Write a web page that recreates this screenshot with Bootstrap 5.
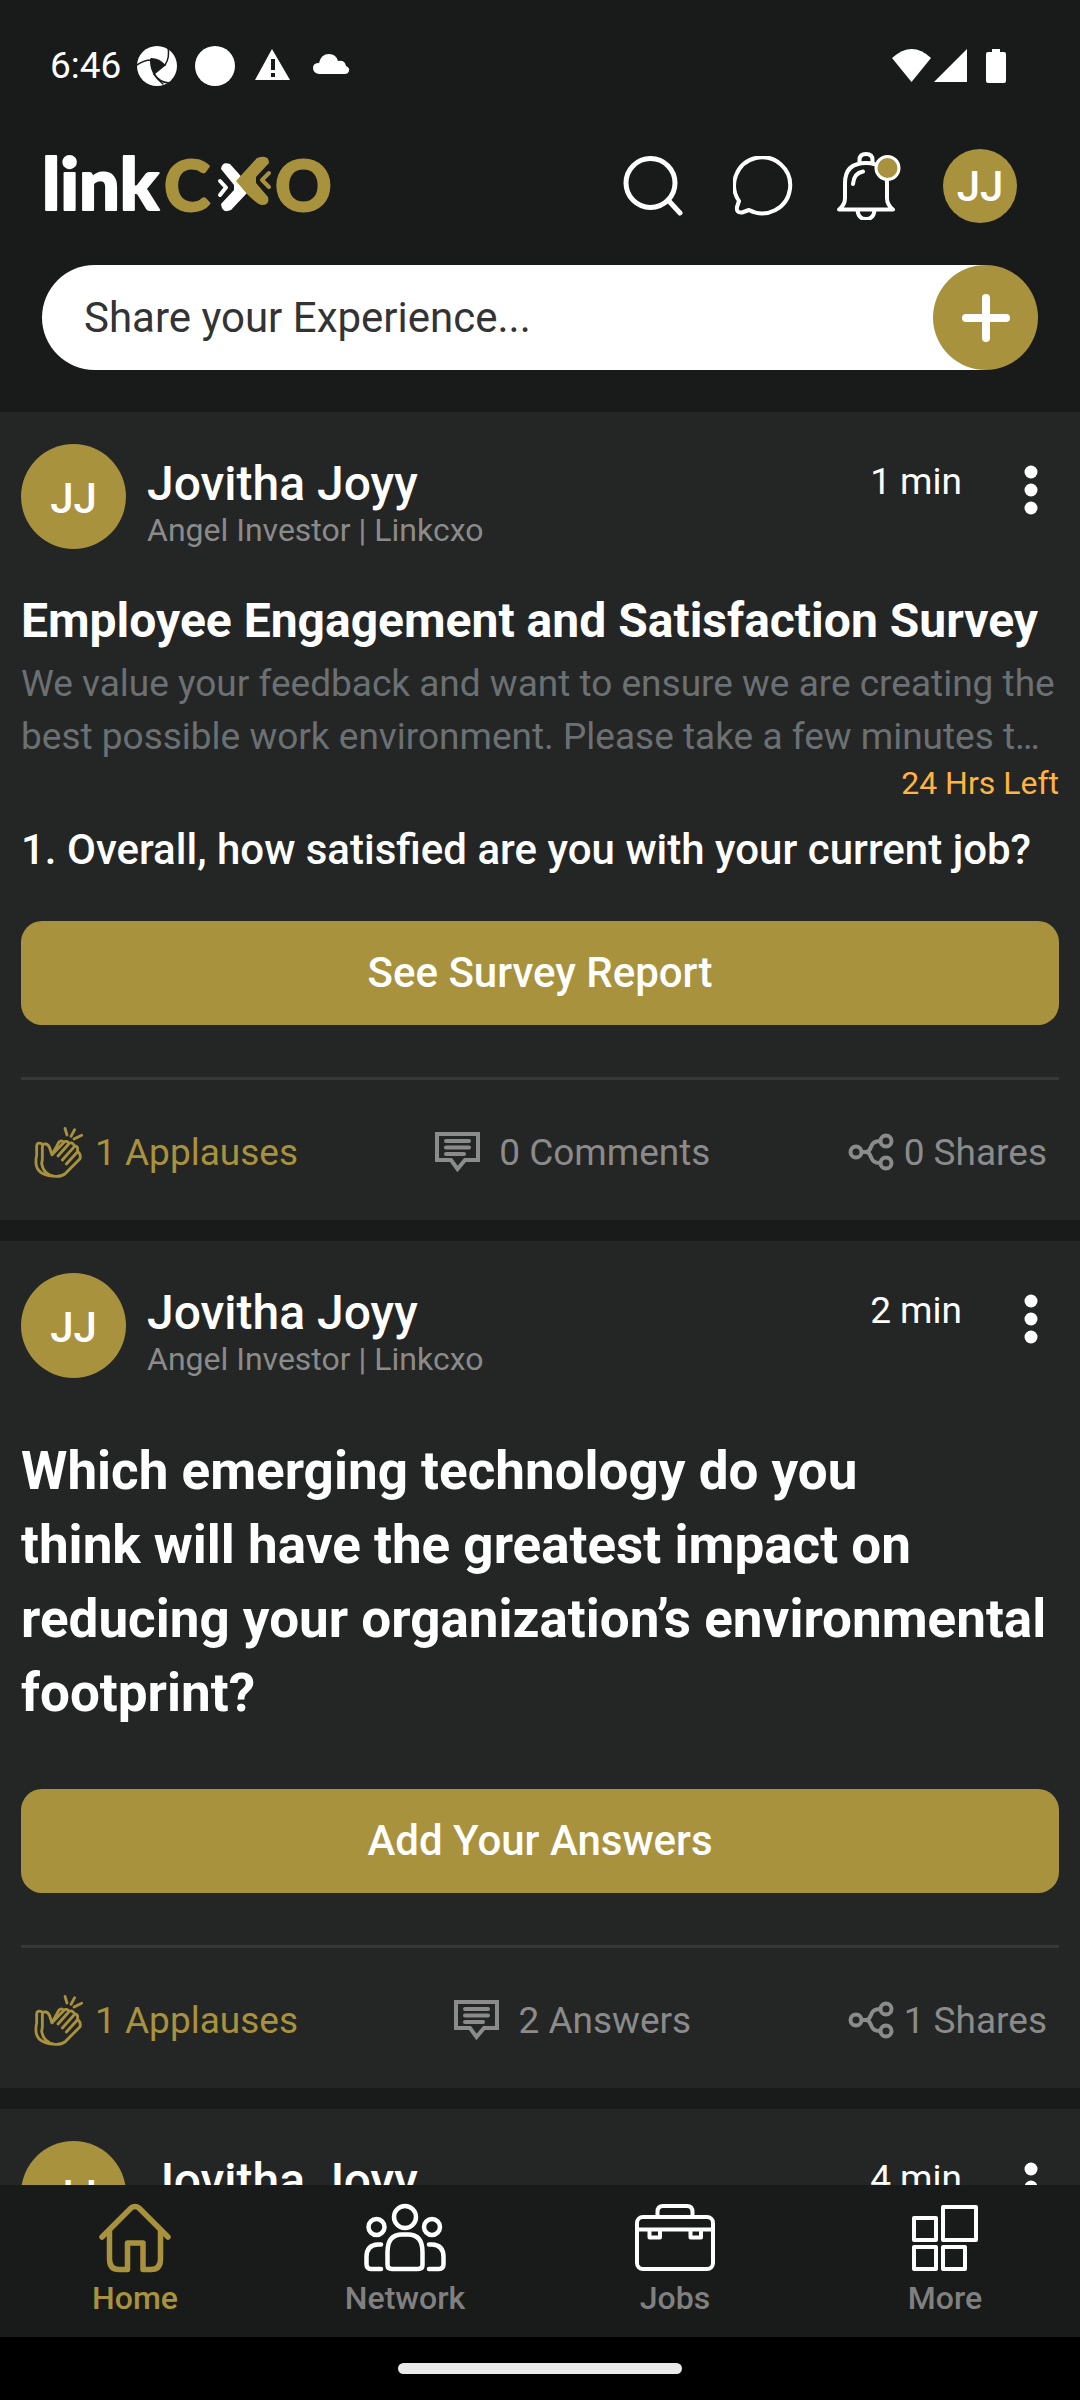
<!DOCTYPE html>
<html lang="en">
<head>
<meta charset="utf-8">
<meta name="viewport" content="width=device-width, initial-scale=1">
<title>LinkCXO – Home</title>
<link href="https://cdn.jsdelivr.net/npm/bootstrap@5.3.0/dist/css/bootstrap.min.css" rel="stylesheet">
<style>
:root{--gold:#a9923d;--ink:#191b1a;--panel:#242625;--muted:#8a8b8a}
body{background:var(--ink);color:#fff;font-family:Roboto,"Liberation Sans",sans-serif}
svg{display:block;flex-shrink:0;fill:none;stroke:currentColor;stroke-linecap:round;stroke-linejoin:round}
.solid{fill:currentColor;stroke:none}
.plain-btn{background:none;border:0;padding:0;color:inherit;font:inherit;text-decoration:none}
.status-row{height:132px;padding:0 74px 0 50px;font-size:37px}
.status-row .start{gap:18px}
.status-row .start span{margin-right:-2px}
.top-row{height:108px;padding:0 63px 0 40px}
.top-actions{gap:42px}
.plain-btn.face,.face{width:105px;height:105px;background:var(--gold);font-size:42px;line-height:50px;font-weight:500;padding-top:4px}
.plain-btn.face-sm{width:74px;height:74px;padding-top:2px}
.share-row{margin:25px 42px 42px;height:105px}
.share-row input{border:0;padding:0 42px;font-size:42px;color:#333;border-radius:53px 0 0 53px}
.share-row input::placeholder{color:#333;opacity:1}
.share-end{background:linear-gradient(90deg,#fff 50%,transparent 50%)}
.share-add{width:105px;height:105px;background:var(--gold);border:0;color:#fff}
.feed{min-height:0;overflow:hidden;gap:21px}
.post{background:var(--panel);padding:32px 21px 0;flex-shrink:0}
.post-head{gap:21px;padding-right:21px}
.who{padding-top:15px}
.who-name{font-size:48px;line-height:50px;font-weight:500}
.who-role{font-size:32px;line-height:42px;color:var(--muted)}
.when{font-size:37px;line-height:46px;margin-right:41px;padding-top:15px}
.dots{margin-top:21px}
.survey-title{font-size:48px;line-height:56px;font-weight:700;margin:42px 0 8px}
.survey-text{font-size:37px;line-height:53px;color:#6b7073;margin:0}
.time-left{font-size:32px;line-height:40px;color:#ffb341}
.survey-q{font-size:42px;line-height:50px;font-weight:500;margin:22px 0 46px}
.poll-q{font-size:53px;line-height:74px;font-weight:700;margin:54px 0 59px}
.act{background:var(--gold);color:#fff;font-size:42px;line-height:50px;font-weight:500;border:0;border-radius:21px;height:104px}
.act:hover{background:#98832f;color:#fff}
.rule{height:3px;background:#353839;margin-top:52px}
.post-foot{padding:46px 12px 42px 13px;font-size:37px;line-height:51px;color:var(--muted)}
.post-foot .liked{color:var(--gold);gap:11px}
.gap-note{gap:18px}
.post-foot .gap-share{gap:10px}
.tabs-bar{background:var(--ink);height:152px;padding-top:18px;font-size:32px;line-height:40px;font-weight:500}
.tabs-bar a{color:#fff;text-decoration:none;gap:5px}
.tabs-bar a span{color:#808080}
.tabs-bar a.on,.tabs-bar a.on span{color:var(--gold)}
.gesture{background:#000;height:63px}
.gesture div{width:284px;height:11px;background:#ebebeb}
</style>
</head>
<body>
<svg width="0" height="0" class="position-absolute" aria-hidden="true">
  <symbol id="clap" viewBox="0 0 150 156"><g stroke-width="8.500">
    <path d="M93 7l6 20M122 11l-11 20M143 28l-23 11"/>
    <path d="M25 54Q8 47 8 60V88Q5 96 6 112Q9 146 55 150"/>
    <path d="M25 62Q26 52 36 54Q45 56 49 72L54 86L75 48Q82 41 89 49Q98 42 105 52Q115 47 122 60Q134 60 130 76Q142 84 138 98L95 142Q82 153 62 151Q28 146 23 112Q25 104 25 96Z" fill="none"/>
    <path d="M54 86L88 51M72 90L104 54M85 102L121 62M97 114L130 78"/></g></symbol>
  <symbol id="note" viewBox="0 0 46 40"><path d="M2 2H43V28H30L22.500 37L16 28H2Z" stroke-width="4" stroke-linejoin="miter"/><path d="M11 9H34M11 15.500H34M11 22H29" stroke-width="4"/></symbol>
  <symbol id="share" viewBox="0 0 46 40"><g stroke-width="4"><circle cx="8" cy="20" r="5.500"/><circle cx="38" cy="9" r="5.500"/><circle cx="38" cy="31" r="5.500"/><path d="M14 20H18C25 20 20 9 32 9M18 20C25 20 20 31 32 31"/></g></symbol>
  <symbol id="more-v" viewBox="0 0 14 50"><g class="solid"><circle cx="7" cy="7" r="6.500"/><circle cx="7" cy="25" r="6.500"/><circle cx="7" cy="43" r="6.500"/></g></symbol>
</svg>

<div class="vh-100 d-flex flex-column overflow-hidden">
  <div class="status-row d-flex flex-shrink-0 align-items-center justify-content-between">
    <div class="start d-flex align-items-center">
      <span>6:46</span>
      <svg width="40" height="40" viewBox="0 0 40 40"><circle cx="20" cy="20" r="20" class="solid"/><g stroke="#191b1a" stroke-width="1.500"><path d="M0 19Q14 9 28 19L17 28Q13 20 14 13L28 19L17 28Q22 36 32 37" /><path d="M28 19Q33 12 31 1M17 28Q21 34 26 38" /></g><path d="M14 12Q23 12 28 19L17 28Q12 20 14 12Z" fill="#191b1a" stroke="none"/></svg>
      <svg width="40" height="40" viewBox="0 0 40 40"><circle cx="20" cy="20" r="20" class="solid"/></svg>
      <svg width="40" height="40" viewBox="0 0 40 40"><path class="solid" d="M19 3L37 34H2Z"/><path d="M20 13V24M20 27V31" stroke="#191b1a" stroke-width="4" stroke-linecap="butt"/></svg>
      <svg width="40" height="40" viewBox="0 0 40 40"><path class="solid" d="M8 28Q2 27 2 22Q2 17 8 17Q10 8 18 8Q25 8 27 15Q34 14 35 20Q39 22 38 25Q37 28 34 28Z"/></svg>
    </div>
    <div class="d-flex align-items-center">
      <svg width="42" height="36" viewBox="0 0 42 36"><path class="solid" d="M0 10Q20 -8 39 10L19.500 34Z"/></svg>
      <svg width="52" height="36" viewBox="0 0 52 36"><path class="solid" d="M0 34L33 1V34Z"/></svg>
      <svg width="20" height="36" viewBox="0 0 20 36"><path class="solid" d="M6 1H14V4H18Q20 4 20 6V33Q20 35 18 35H2Q0 35 0 33V6Q0 4 2 4H6Z"/></svg>
    </div>
  </div>

  <header class="top-row d-flex flex-shrink-0 align-items-center justify-content-between">
    <a href="#" class="plain-btn" aria-label="linkCXO">
      <svg width="300" height="92" viewBox="40 140 300 92" font-family="Lato, sans-serif" font-weight="900" stroke-width="2">
        <text x="42" y="210" font-size="72" fill="#fff" stroke="#fff">link</text>
        <text x="164" y="211" font-size="70" fill="#a9923d" stroke="#a9923d">C</text>
        <text x="275" y="211" font-size="70" fill="#a9923d" stroke="#a9923d">O</text>
        <path fill="#fff" stroke="none" d="M221 169Q222 161 230 164L247 183V193L231 210Q222 214 221 204L234 190V185Z"/>
        <path stroke="#fff" stroke-width="4" d="M220 181L226 187.500L220 195"/>
        <path fill="#a9923d" stroke="none" d="M236 181L257 158Q269 154 269 163L256 177V183L268 197Q270 205 262 205Q258 205 247 194Z"/>
        <path stroke="#a9923d" stroke-width="4" d="M269 173L262 180L269 187"/>
      </svg>
    </a>
    <div class="top-actions d-flex align-items-center">
      <button class="plain-btn" aria-label="Search"><svg width="68" height="60" viewBox="0 0 68 60" stroke-width="5"><circle cx="27.500" cy="27" r="24.500"/><path d="M45 44L57 57"/></svg></button>
      <button class="plain-btn" aria-label="Messages"><svg width="62" height="60" viewBox="0 0 62 60" stroke-width="4"><path d="M6 45A28 28 0 1 1 16 54L9 56.500Q3 57 4 51Z"/></svg></button>
      <button class="plain-btn" aria-label="Notifications"><svg width="64" height="68" viewBox="0 0 64 68" stroke-width="4"><path d="M22.500 11V8Q22.500 2 29 2Q35.500 2 35.500 8V11M8 46V31Q8 11 29 11Q50 11 50 31V46Q50 53 56 57.500H2Q8 53 8 46ZM20.500 58Q21 67 29 67Q37 67 37.500 58M16 32Q17 21 26 19.500"/><circle cx="50.500" cy="16" r="11.500" fill="#a9923d" stroke-width="3"/></svg></button>
      <button class="plain-btn face face-sm rounded-circle d-flex align-items-center justify-content-center">JJ</button>
    </div>
  </header>

  <div class="share-row d-flex flex-shrink-0">
    <input type="text" class="flex-fill w-100" placeholder="Share your Experience..." aria-label="Share your Experience">
    <div class="share-end"><button class="share-add rounded-circle d-flex align-items-center justify-content-center p-0" aria-label="Add"><svg width="48" height="48" viewBox="0 0 48 48" stroke-width="8"><path d="M24 4V44M4 24H44"/></svg></button></div>
  </div>

  <main class="feed flex-fill d-flex flex-column">
    <article class="post">
      <div class="post-head d-flex align-items-start">
        <div class="face rounded-circle d-flex align-items-center justify-content-center">JJ</div>
        <div class="who flex-fill"><div class="who-name">Jovitha Joyy</div><div class="who-role">Angel Investor | Linkcxo</div></div>
        <div class="when">1 min</div>
        <button class="plain-btn dots" aria-label="Post menu"><svg width="14" height="50"><use href="#more-v"/></svg></button>
      </div>
      <h2 class="survey-title">Employee Engagement and Satisfaction Survey</h2>
      <p class="survey-text">We value your feedback and want to ensure we are creating the best possible work environment. Please take a few minutes t…</p>
      <div class="time-left text-end">24 Hrs Left</div>
      <h3 class="survey-q">1. Overall, how satisfied are you with your current job?</h3>
      <button class="btn act w-100">See Survey Report</button>
      <div class="rule"></div>
      <div class="post-foot d-flex justify-content-between">
        <button class="plain-btn liked d-flex align-items-center"><svg width="50" height="52"><use href="#clap"/></svg>1 Applauses</button>
        <button class="plain-btn gap-note d-flex align-items-center"><svg width="46" height="40"><use href="#note"/></svg>0 Comments</button>
        <button class="plain-btn gap-share d-flex align-items-center"><svg width="46" height="40"><use href="#share"/></svg>0 Shares</button>
      </div>
    </article>

    <article class="post">
      <div class="post-head d-flex align-items-start">
        <div class="face rounded-circle d-flex align-items-center justify-content-center">JJ</div>
        <div class="who flex-fill"><div class="who-name">Jovitha Joyy</div><div class="who-role">Angel Investor | Linkcxo</div></div>
        <div class="when">2 min</div>
        <button class="plain-btn dots" aria-label="Post menu"><svg width="14" height="50"><use href="#more-v"/></svg></button>
      </div>
      <h2 class="poll-q">Which emerging technology do you<br>think will have the greatest impact on reducing your organization’s environmental footprint?</h2>
      <button class="btn act w-100">Add Your Answers</button>
      <div class="rule"></div>
      <div class="post-foot d-flex justify-content-between">
        <button class="plain-btn liked d-flex align-items-center"><svg width="50" height="52"><use href="#clap"/></svg>1 Applauses</button>
        <button class="plain-btn gap-note d-flex align-items-center"><svg width="46" height="40"><use href="#note"/></svg>2 Answers</button>
        <button class="plain-btn gap-share d-flex align-items-center"><svg width="46" height="40"><use href="#share"/></svg>1 Shares</button>
      </div>
    </article>

    <article class="post">
      <div class="post-head d-flex align-items-start">
        <div class="face rounded-circle d-flex align-items-center justify-content-center">JJ</div>
        <div class="who flex-fill"><div class="who-name">Jovitha Joyy</div></div>
        <div class="when">4 min</div>
        <button class="plain-btn dots" aria-label="Post menu"><svg width="14" height="50"><use href="#more-v"/></svg></button>
      </div>
    </article>
  </main>

  <nav class="tabs-bar d-flex flex-shrink-0" aria-label="Main">
    <a href="#" class="on col d-flex flex-column align-items-center"><svg width="72" height="70" viewBox="0 0 72 70" stroke-width="5.500"><path d="M3 34L32 5Q36 2 40 5L69 34"/><path d="M10.500 28V56Q10.500 66.500 20 66.500H28.500V40H44V66.500H52Q61.500 66.500 61.500 56V28"/></svg><span>Home</span></a>
    <a href="#" class="col d-flex flex-column align-items-center"><svg width="82" height="70" viewBox="0 0 82 70" stroke-width="4.500"><circle cx="41" cy="14" r="11"/><circle cx="12.500" cy="24" r="8"/><circle cx="68" cy="24" r="8"/><path d="M23.500 62V49Q23.500 31.500 38 31.500H44Q58.500 31.500 58.500 49V62Q58.500 66 54 66H28Q23.500 66 23.500 62ZM17 41.500H14Q2.500 42 2.500 54V61Q2.500 66 7 66H17M65 41.500H68Q79.500 42 79.500 54V61Q79.500 66 75 66H65"/></svg><span>Network</span></a>
    <a href="#" class="col d-flex flex-column align-items-center"><svg width="80" height="70" viewBox="0 0 80 70" stroke-width="4"><rect x="2" y="14" width="76" height="52" rx="6"/><path d="M22.500 13V9Q22.500 3 28 3H52Q57.500 3 57.500 9V13M2 26.500H78M14.500 27V34.500H25V27M55.500 27V34.500H66V27"/></svg><span>Jobs</span></a>
    <a href="#" class="col d-flex flex-column align-items-center"><svg width="66" height="70" viewBox="0 0 66 70" stroke-width="4"><path d="M2 15H24V37H2ZM31 4H64V37H31ZM2 44H24V66H2ZM31 44H53V66H31Z"/></svg><span>More</span></a>
  </nav>
  <div class="gesture d-flex flex-shrink-0 align-items-center justify-content-center"><div class="rounded-pill"></div></div>
</div>
<script src="https://cdn.jsdelivr.net/npm/bootstrap@5.3.0/dist/js/bootstrap.bundle.min.js"></script>
</body>
</html>
